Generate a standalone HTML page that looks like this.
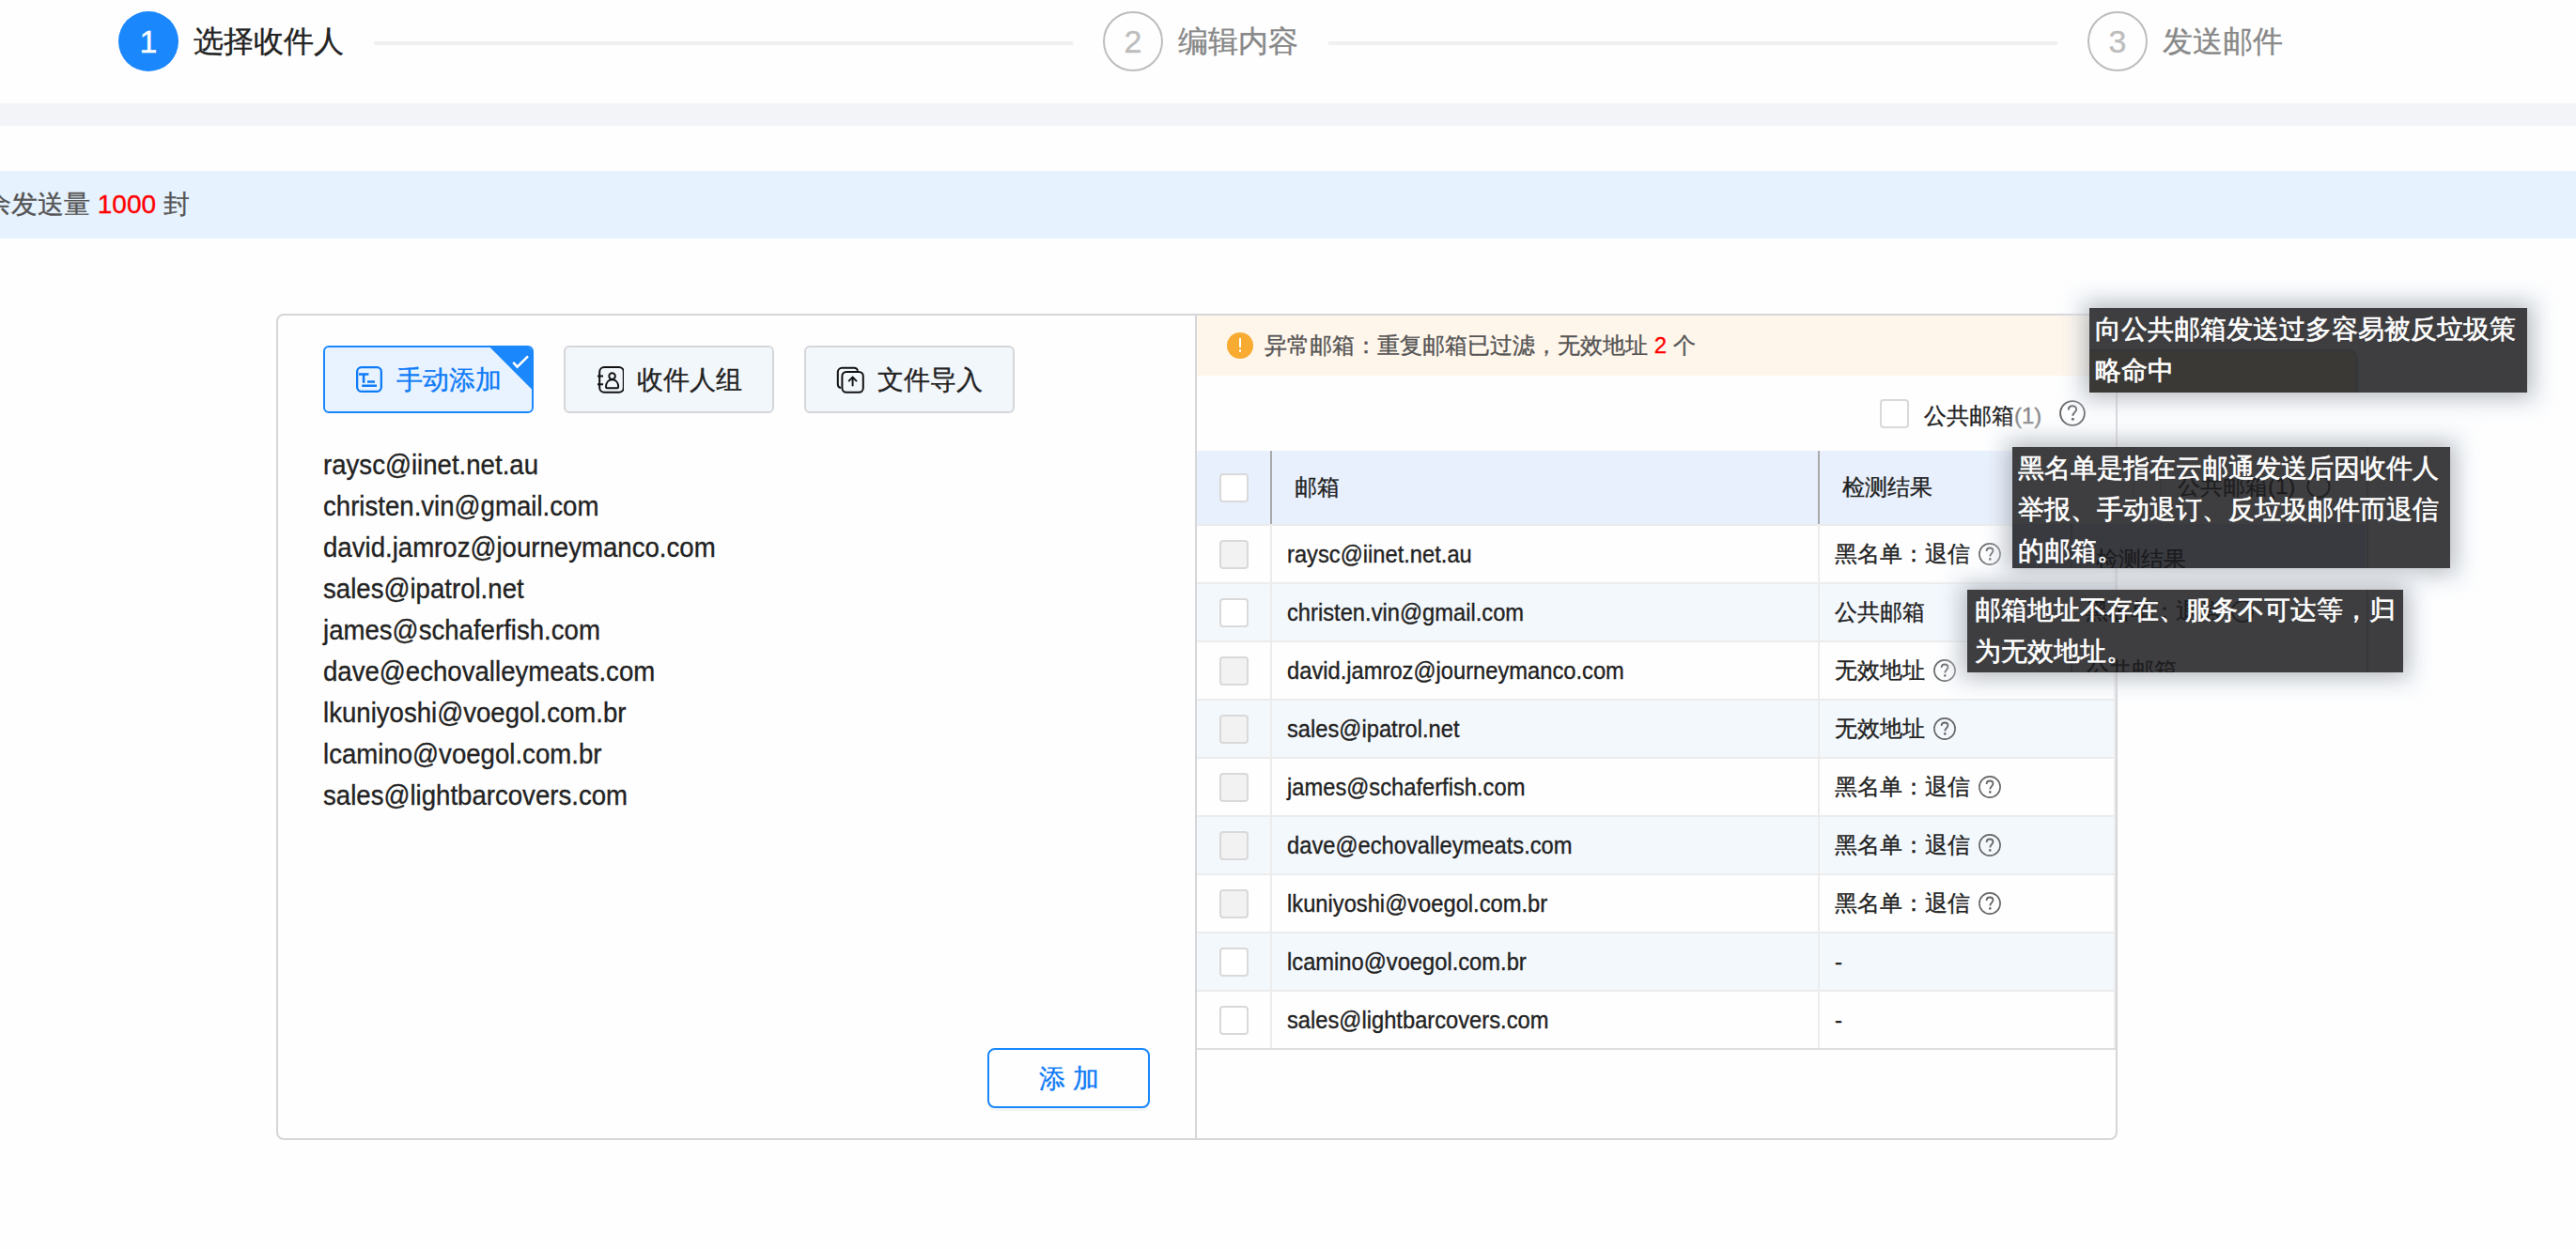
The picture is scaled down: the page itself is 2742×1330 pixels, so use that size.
<!DOCTYPE html>
<html><head><meta charset="utf-8">
<style>
*{box-sizing:border-box;margin:0;padding:0}
html,body{width:2742px;height:1330px;overflow:hidden;background:#fefefe;font-family:"Liberation Sans",sans-serif;color:#222}
body{-webkit-text-stroke:0.35px currentColor}
.a{position:absolute}
.circ{position:absolute;top:12px;width:64px;height:64px;border-radius:50%;text-align:center;line-height:64px;font-size:34px}
.c1{left:126px;background:#1a87fc;color:#fff}
.c2,.c3{border:2px solid #bdbdbd;color:#bdbdbd;line-height:60px}
.c2{left:1174px}.c3{left:2222px}
.stitle{position:absolute;top:22px;font-size:32px;line-height:44px;white-space:nowrap}
.sline{position:absolute;top:44px;height:4px;background:#f0f0f0}
.band1{position:absolute;left:0;top:110px;width:2742px;height:24px;background:#f3f4f8}
.band2{position:absolute;left:0;top:182px;width:2742px;height:72px;background:#e6f2fe}
.panel{position:absolute;left:294px;top:334px;width:1960px;height:880px;border:2px solid #d6d6d9;border-radius:8px;background:#fefefe}
.divider{position:absolute;left:1272px;top:336px;width:2px;height:876px;background:#d6d6d9}
.btn{position:absolute;top:368px;width:224px;height:72px;border:2px solid #d6d6d9;border-radius:6px;background:#f2f7fc;font-size:28px;line-height:68px;white-space:nowrap}
.btn .ic{position:absolute;left:32px;top:20px;width:30px;height:30px}
.btn .tx{position:absolute;left:76px;top:1px}
.b1{left:344px;border-color:#1a87fc;background:#e8f3ff;color:#0f7bf7;overflow:hidden}
.b2{left:600px}.b3{left:856px}
.emails{position:absolute;left:344px;top:473px;font-size:30px;line-height:44px;color:#222;white-space:nowrap;transform:scaleX(0.92);transform-origin:0 0}
.addbtn{position:absolute;left:1051px;top:1116px;width:173px;height:64px;border:2px solid #1a87fc;border-radius:8px;background:#fefefe;color:#0f7bf7;font-size:28px;line-height:62px;text-align:center;letter-spacing:8px;padding-left:8px;box-shadow:0 3px 0 rgba(0,0,0,0.04)}
.warn{position:absolute;left:1274px;top:336px;width:978px;height:64px;background:#fff6eb}
.warn .ico{position:absolute;left:32px;top:18px;width:28px;height:28px;border-radius:50%;background:#f7ab30}
.warn .tx{position:absolute;left:72px;top:0;font-size:24px;line-height:64px;color:#555;white-space:nowrap}
.cb{position:absolute;width:31px;height:31px;border:2px solid #d9d9d9;border-radius:4px;background:#fff}
.cb.dis{background:#f2f2f2}
.thead{position:absolute;left:1274px;top:480px;width:978px;height:78px;background:#e8f0fd}
.row{position:absolute;left:1274px;width:978px;height:62px;border-bottom:2px solid #ececec}
.row.alt{background:#f3f8fd}
.vsep{position:absolute;width:2px}
.cell{position:absolute;font-size:24px;line-height:60px;white-space:nowrap;color:#222}
.email{left:96px;font-size:25.5px;transform:scaleX(0.93);transform-origin:0 0}
.res{left:679px}
.help{display:inline-block;vertical-align:middle}
.tip{position:absolute;width:466px;background:#3e3e40;color:#fff;font-size:28px;line-height:44px;white-space:nowrap;-webkit-text-stroke:0.6px #fff}
.tsh{position:absolute;width:466px;background:#3e3e40;box-shadow:0 0 22px 4px rgba(0,0,0,0.26),0 0 18px 20px rgba(236,241,250,0.45)}
.ghost{position:absolute;color:rgba(0,0,0,0.5);-webkit-text-stroke:0.3px rgba(0,0,0,0.5);font-size:24px;line-height:30px;white-space:nowrap}
</style></head><body>
<!-- steps -->
<div class="circ c1">1</div>
<div class="stitle" style="left:206px;color:#222">选择收件人</div>
<div class="sline" style="left:398px;width:744px"></div>
<div class="circ c2">2</div>
<div class="stitle" style="left:1254px;color:#888">编辑内容</div>
<div class="sline" style="left:1414px;width:776px"></div>
<div class="circ c3">3</div>
<div class="stitle" style="left:2302px;color:#888">发送邮件</div>

<div class="band1"></div>
<div class="band2"><div class="a" style="left:-16px;top:0;font-size:28px;line-height:72px;color:#555;white-space:nowrap">余发送量 <span style="color:#f00">1000</span> 封</div></div>

<div class="panel"></div>
<div class="divider"></div>

<!-- left panel buttons -->
<div class="btn b1">
 <svg class="ic" style="left:32px;top:20px" width="30" height="30" viewBox="0 0 30 30"><rect x="2.15" y="1.15" width="25.7" height="25.7" rx="4.5" fill="none" stroke="#0f7bf7" stroke-width="2.3"/><path d="M4 8.5H14.4M9.1 8.5V17.8M13 16.5H21M7.2 20.7H23" stroke="#0f7bf7" stroke-width="2.6" fill="none"/></svg>
 <span class="tx" style="left:76px">手动添加</span>
 <svg class="a" style="left:175px;top:0px" width="45" height="46" viewBox="0 0 45 46"><path d="M0.7 0H45V44.5z" fill="#1a87fc"/><path d="M25.2 15.8L29.6 20.7L41 9.3" stroke="#fff" stroke-width="2.6" fill="none"/></svg>
</div>
<div class="btn b2">
 <svg class="ic" style="left:32px;top:20px" width="30" height="30" viewBox="0 0 30 30"><rect x="4.2" y="1" width="25.6" height="26.8" rx="5" fill="none" stroke="#111" stroke-width="2"/><path d="M2 10.6H8M2 19.2H8" stroke="#111" stroke-width="2" fill="none"/><circle cx="17.6" cy="10.6" r="3.3" fill="none" stroke="#111" stroke-width="1.9"/><path d="M11 22.2C11 17 13.8 14.2 17.6 14.2C21.4 14.2 24.2 17 24.2 22.2C24.2 22.8 23.6 23.2 23 23.2H12.2C11.6 23.2 11 22.8 11 22.2Z" fill="none" stroke="#111" stroke-width="1.9"/></svg>
 <span class="tx" style="left:76px;color:#222">收件人组</span>
</div>
<div class="btn b3">
 <svg class="ic" style="left:32px;top:20px" width="30" height="30" viewBox="0 0 30 30"><path d="M23 4.8A4 4 0 0 0 19.2 1.8H6.2A4.5 4.5 0 0 0 1.8 6.3V19.2A4 4 0 0 0 5 23" fill="none" stroke="#111" stroke-width="2"/><rect x="6.4" y="6" width="22.4" height="21.8" rx="4.5" fill="none" stroke="#111" stroke-width="2"/><path d="M13.2 16.2L17.6 11.6L22 16.2M17.6 11.6V21.2" fill="none" stroke="#111" stroke-width="1.9"/></svg>
 <span class="tx" style="left:76px;color:#222">文件导入</span>
</div>

<div class="emails">raysc@iinet.net.au<br>christen.vin@gmail.com<br>david.jamroz@journeymanco.com<br>sales@ipatrol.net<br>james@schaferfish.com<br>dave@echovalleymeats.com<br>lkuniyoshi@voegol.com.br<br>lcamino@voegol.com.br<br>sales@lightbarcovers.com</div>

<div class="addbtn">添加</div>

<!-- right panel -->
<div class="warn"><div class="ico"><div class="a" style="left:13px;top:6px;width:2.3px;height:10px;background:#fff"></div><div class="a" style="left:12.8px;top:18px;width:2.6px;height:3px;background:#fff;border-radius:1px"></div></div><div class="tx">异常邮箱：重复邮箱已过滤，无效地址 <span style="color:#f00">2</span> 个</div></div>

<div class="cb" style="left:2001px;top:425px"></div>
<div class="a" style="left:2048px;top:421px;font-size:24px;line-height:44px;color:#222;white-space:nowrap">公共邮箱<span style="color:#888">(1)</span></div>
<svg class="a" style="left:2191px;top:425px" width="30" height="30" viewBox="0 0 30 30"><circle cx="15" cy="15" r="12.9" fill="none" stroke="#5e5e60" stroke-width="1.9"/><path d="M10.8 11.4C10.8 8.8 12.6 7.3 15 7.3C17.4 7.3 19.2 8.9 19.2 11C19.2 13.6 15.4 14.3 15.4 17.8" fill="none" stroke="#5e5e60" stroke-width="2"/><circle cx="15.4" cy="21.3" r="1.5" fill="#5e5e60"/></svg>

<div class="thead"><div class="cb" style="left:24px;top:24px"></div><div class="vsep" style="left:78px;top:0;height:78px;background:#a9a9ab"></div><div class="cell" style="left:104px;line-height:78px">邮箱</div><div class="vsep" style="left:661px;top:0;height:78px;background:#a9a9ab"></div><div class="cell" style="left:687px;line-height:78px">检测结果</div></div>
<div class="a" style="left:1274px;top:558px;width:978px;height:2px;background:#ececec"></div>
<div class="row" style="top:560px"><div class="cb dis" style="left:24px;top:15px"></div><div class="vsep" style="left:78px;top:0;height:60px;background:#ececec"></div><div class="cell email">raysc@iinet.net.au</div><div class="vsep" style="left:661px;top:0;height:60px;background:#ececec"></div><div class="cell res">黑名单：退信<svg class="help" width="26" height="26" viewBox="0 0 26 26" style="margin-left:8px;margin-top:-4px"><circle cx="13" cy="13" r="11.1" fill="none" stroke="#666" stroke-width="1.6"/><path d="M9.6 10C9.6 7.8 11.1 6.5 13.1 6.5C15.1 6.5 16.5 7.8 16.5 9.6C16.5 11.9 13.3 12.3 13.3 15.4" fill="none" stroke="#666" stroke-width="1.8"/><circle cx="13.3" cy="18.4" r="1.3" fill="#666"/></svg></div></div>
<div class="row alt" style="top:622px"><div class="cb" style="left:24px;top:15px"></div><div class="vsep" style="left:78px;top:0;height:60px;background:#ececec"></div><div class="cell email">christen.vin@gmail.com</div><div class="vsep" style="left:661px;top:0;height:60px;background:#ececec"></div><div class="cell res">公共邮箱</div></div>
<div class="row" style="top:684px"><div class="cb dis" style="left:24px;top:15px"></div><div class="vsep" style="left:78px;top:0;height:60px;background:#ececec"></div><div class="cell email">david.jamroz@journeymanco.com</div><div class="vsep" style="left:661px;top:0;height:60px;background:#ececec"></div><div class="cell res">无效地址<svg class="help" width="26" height="26" viewBox="0 0 26 26" style="margin-left:8px;margin-top:-4px"><circle cx="13" cy="13" r="11.1" fill="none" stroke="#666" stroke-width="1.6"/><path d="M9.6 10C9.6 7.8 11.1 6.5 13.1 6.5C15.1 6.5 16.5 7.8 16.5 9.6C16.5 11.9 13.3 12.3 13.3 15.4" fill="none" stroke="#666" stroke-width="1.8"/><circle cx="13.3" cy="18.4" r="1.3" fill="#666"/></svg></div></div>
<div class="row alt" style="top:746px"><div class="cb dis" style="left:24px;top:15px"></div><div class="vsep" style="left:78px;top:0;height:60px;background:#ececec"></div><div class="cell email">sales@ipatrol.net</div><div class="vsep" style="left:661px;top:0;height:60px;background:#ececec"></div><div class="cell res">无效地址<svg class="help" width="26" height="26" viewBox="0 0 26 26" style="margin-left:8px;margin-top:-4px"><circle cx="13" cy="13" r="11.1" fill="none" stroke="#666" stroke-width="1.6"/><path d="M9.6 10C9.6 7.8 11.1 6.5 13.1 6.5C15.1 6.5 16.5 7.8 16.5 9.6C16.5 11.9 13.3 12.3 13.3 15.4" fill="none" stroke="#666" stroke-width="1.8"/><circle cx="13.3" cy="18.4" r="1.3" fill="#666"/></svg></div></div>
<div class="row" style="top:808px"><div class="cb dis" style="left:24px;top:15px"></div><div class="vsep" style="left:78px;top:0;height:60px;background:#ececec"></div><div class="cell email">james@schaferfish.com</div><div class="vsep" style="left:661px;top:0;height:60px;background:#ececec"></div><div class="cell res">黑名单：退信<svg class="help" width="26" height="26" viewBox="0 0 26 26" style="margin-left:8px;margin-top:-4px"><circle cx="13" cy="13" r="11.1" fill="none" stroke="#666" stroke-width="1.6"/><path d="M9.6 10C9.6 7.8 11.1 6.5 13.1 6.5C15.1 6.5 16.5 7.8 16.5 9.6C16.5 11.9 13.3 12.3 13.3 15.4" fill="none" stroke="#666" stroke-width="1.8"/><circle cx="13.3" cy="18.4" r="1.3" fill="#666"/></svg></div></div>
<div class="row alt" style="top:870px"><div class="cb dis" style="left:24px;top:15px"></div><div class="vsep" style="left:78px;top:0;height:60px;background:#ececec"></div><div class="cell email">dave@echovalleymeats.com</div><div class="vsep" style="left:661px;top:0;height:60px;background:#ececec"></div><div class="cell res">黑名单：退信<svg class="help" width="26" height="26" viewBox="0 0 26 26" style="margin-left:8px;margin-top:-4px"><circle cx="13" cy="13" r="11.1" fill="none" stroke="#666" stroke-width="1.6"/><path d="M9.6 10C9.6 7.8 11.1 6.5 13.1 6.5C15.1 6.5 16.5 7.8 16.5 9.6C16.5 11.9 13.3 12.3 13.3 15.4" fill="none" stroke="#666" stroke-width="1.8"/><circle cx="13.3" cy="18.4" r="1.3" fill="#666"/></svg></div></div>
<div class="row" style="top:932px"><div class="cb dis" style="left:24px;top:15px"></div><div class="vsep" style="left:78px;top:0;height:60px;background:#ececec"></div><div class="cell email">lkuniyoshi@voegol.com.br</div><div class="vsep" style="left:661px;top:0;height:60px;background:#ececec"></div><div class="cell res">黑名单：退信<svg class="help" width="26" height="26" viewBox="0 0 26 26" style="margin-left:8px;margin-top:-4px"><circle cx="13" cy="13" r="11.1" fill="none" stroke="#666" stroke-width="1.6"/><path d="M9.6 10C9.6 7.8 11.1 6.5 13.1 6.5C15.1 6.5 16.5 7.8 16.5 9.6C16.5 11.9 13.3 12.3 13.3 15.4" fill="none" stroke="#666" stroke-width="1.8"/><circle cx="13.3" cy="18.4" r="1.3" fill="#666"/></svg></div></div>
<div class="row alt" style="top:994px"><div class="cb" style="left:24px;top:15px"></div><div class="vsep" style="left:78px;top:0;height:60px;background:#ececec"></div><div class="cell email">lcamino@voegol.com.br</div><div class="vsep" style="left:661px;top:0;height:60px;background:#ececec"></div><div class="cell res">-</div></div>
<div class="row" style="top:1056px"><div class="cb" style="left:24px;top:15px"></div><div class="vsep" style="left:78px;top:0;height:60px;background:#ececec"></div><div class="cell email">sales@lightbarcovers.com</div><div class="vsep" style="left:661px;top:0;height:60px;background:#ececec"></div><div class="cell res">-</div></div>
<div class="a" style="left:2250px;top:480px;width:2px;height:638px;background:#ececec"></div>
<div class="a" style="left:1274px;top:1116px;width:978px;height:2px;background:#dedede"></div>


<div class="tsh" style="left:2224px;top:328px;height:90px"></div>
<div class="tsh" style="left:2142px;top:476px;height:129px"></div>
<div class="tsh" style="left:2094px;top:628px;height:88px;width:464px"></div>
<div class="tip" style="left:2224px;top:328px;height:90px;overflow:hidden">
<div class="a" style="left:0;top:44px;width:286px;height:48px;background:#3b3935;border-top:2px solid #34363b;border-right:2px solid #34363b;border-top-right-radius:10px"></div>
<span class="a" style="left:6px;top:1px">向公共邮箱发送过多容易被反垃圾策<br>略命中</span></div>
<div class="tip" style="left:2142px;top:476px;height:129px;overflow:hidden">
<div class="a" style="left:0;top:82px;width:376px;height:50px;background:#393a3f"></div>
<div class="a" style="left:62px;top:82px;width:2px;height:50px;background:#333438"></div>
<div class="a" style="left:128px;top:0;width:2px;height:82px;background:#3a3a3c"></div>
<div class="a" style="left:157px;top:0;width:2px;height:82px;background:#3a3a3c"></div>
<div class="a" style="left:377px;top:0;width:2px;height:129px;background:#37373b"></div>
<div class="ghost" style="left:176px;top:27px">公共邮箱(1)<svg width="26" height="26" viewBox="0 0 26 26" style="display:inline-block;vertical-align:middle;margin-left:12px;margin-top:-4px"><circle cx="13" cy="13" r="11.6" fill="none" stroke="rgba(0,0,0,0.45)" stroke-width="2"/></svg></div>
<div class="ghost" style="left:89px;top:105px">检测结果</div>
<span class="a" style="left:6px;top:1px">黑名单是指在云邮通发送后因收件人<br>举报、手动退订、反垃圾邮件而退信<br>的邮箱。</span></div>
<div class="tip" style="left:2094px;top:628px;height:88px;width:464px;overflow:hidden">
<div class="a" style="left:110px;top:54px;width:2px;height:40px;background:#333438"></div>
<div class="a" style="left:425px;top:0;width:2px;height:88px;background:#37373b"></div>
<div class="ghost" style="left:126px;top:8px">黑名单：退信<svg width="26" height="26" viewBox="0 0 26 26" style="display:inline-block;vertical-align:middle;margin-left:10px;margin-top:-4px"><circle cx="13" cy="13" r="11.1" fill="none" stroke="rgba(0,0,0,0.45)" stroke-width="1.8"/></svg></div>
<div class="ghost" style="left:127px;top:71px">公共邮箱</div>
<span class="a" style="left:8px;top:0">邮箱地址不存在、服务不可达等，归<br>为无效地址。</span></div>
</body></html>
